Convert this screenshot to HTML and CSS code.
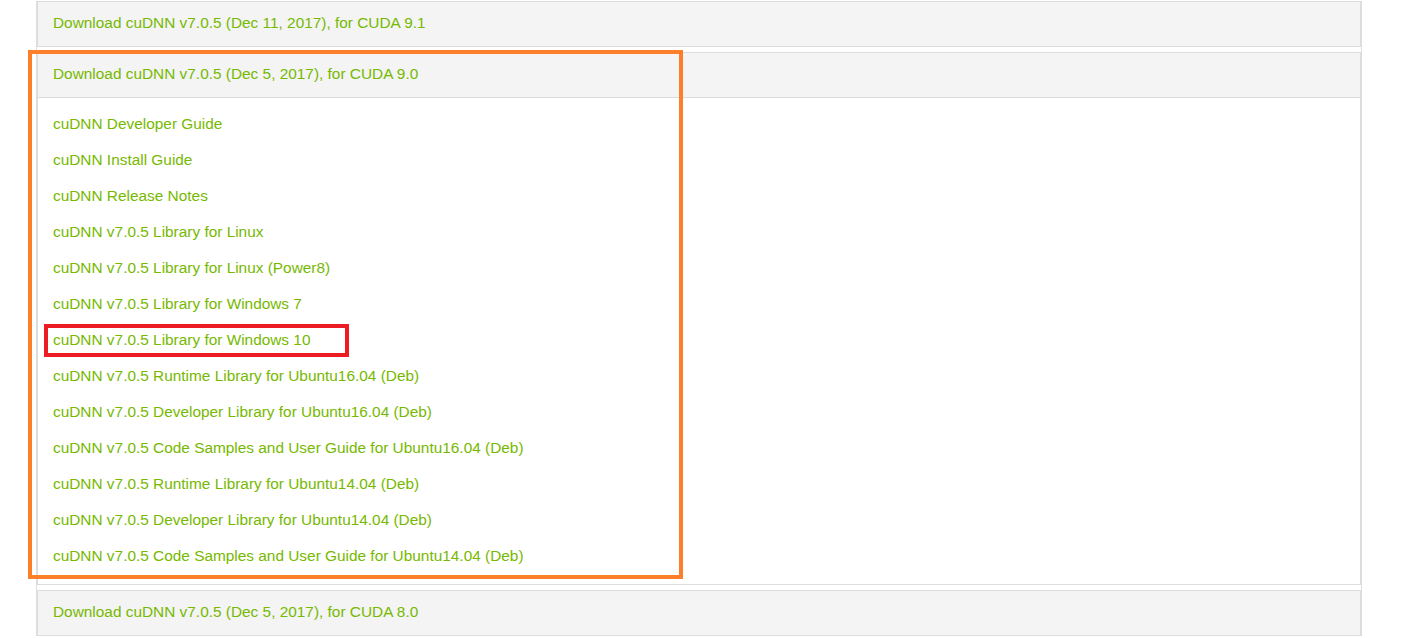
FILE: index.html
```html
<!DOCTYPE html>
<html>
<head>
<meta charset="utf-8">
<link rel="stylesheet" href="styles.css">
</head>
<body>
<div class="group">
  <div class="panel">
    <div class="panel-heading"><a class="link" href="#">Download cuDNN v7.0.5 (Dec 11, 2017), for CUDA 9.1</a></div>
  </div>
  <div class="panel">
    <div class="panel-heading"><a class="link" href="#">Download cuDNN v7.0.5 (Dec 5, 2017), for CUDA 9.0</a></div>
    <div class="panel-body">
      <a class="link item" href="#">cuDNN Developer Guide</a>
      <a class="link item" href="#">cuDNN Install Guide</a>
      <a class="link item" href="#">cuDNN Release Notes</a>
      <a class="link item" href="#">cuDNN v7.0.5 Library for Linux</a>
      <a class="link item" href="#">cuDNN v7.0.5 Library for Linux (Power8)</a>
      <a class="link item" href="#">cuDNN v7.0.5 Library for Windows 7</a>
      <a class="link item" href="#">cuDNN v7.0.5 Library for Windows 10</a>
      <a class="link item" href="#">cuDNN v7.0.5 Runtime Library for Ubuntu16.04 (Deb)</a>
      <a class="link item" href="#">cuDNN v7.0.5 Developer Library for Ubuntu16.04 (Deb)</a>
      <a class="link item" href="#">cuDNN v7.0.5 Code Samples and User Guide for Ubuntu16.04 (Deb)</a>
      <a class="link item" href="#">cuDNN v7.0.5 Runtime Library for Ubuntu14.04 (Deb)</a>
      <a class="link item" href="#">cuDNN v7.0.5 Developer Library for Ubuntu14.04 (Deb)</a>
      <a class="link item" href="#">cuDNN v7.0.5 Code Samples and User Guide for Ubuntu14.04 (Deb)</a>
    </div>
  </div>
  <div class="panel">
    <div class="panel-heading"><a class="link" href="#">Download cuDNN v7.0.5 (Dec 5, 2017), for CUDA 8.0</a></div>
  </div>
</div>
<div class="mark mark-orange"></div>
<div class="mark mark-red"></div>
</body>
</html>
```
FILE: styles.css
```css
html, body {
  margin: 0;
  padding: 0;
  background: #ffffff;
}
body {
  padding-top: 1px;
  font-family: "Liberation Sans", Arial, sans-serif;
  font-size: 15.4px;
  overflow: hidden;
}
.group {
  margin-left: 36px;
  width: 1324px;
  border-left: 1px solid #dedede;
  border-right: 1px solid #dedede;
  display: flex;
  flex-direction: column;
  gap: 5px;
}
.panel {
  border: 1px solid #dcdcdc;
  background: #ffffff;
}
.panel-heading {
  background: #f4f4f4;
  padding: 11px 15px 13px;
  line-height: 20px;
}
.panel-body {
  border-top: 1px solid #dcdcdc;
  padding: 8px 15px 10px;
  display: flex;
  flex-direction: column;
}
.link {
  color: #76b900;
  text-decoration: none;
}
.item {
  line-height: 36px;
}
.mark {
  position: absolute;
  box-sizing: border-box;
}
.mark-orange {
  left: 28px;
  top: 50px;
  width: 655px;
  height: 529px;
  border: 4px solid #fd7f2a;
}
.mark-red {
  left: 44px;
  top: 324px;
  width: 305px;
  height: 33px;
  border: 4px solid #ed1c24;
}
```
